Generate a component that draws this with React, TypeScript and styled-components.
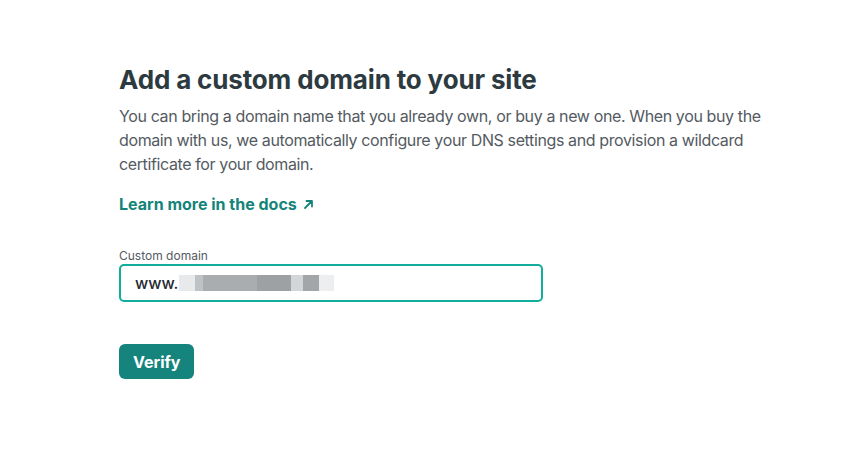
import React, { useState } from "react";
import styled, { createGlobalStyle } from "styled-components";

const GlobalStyle = createGlobalStyle`
  html, body {
    margin: 0;
    padding: 0;
    background: #ffffff;
  }
  body {
    font-family: Inter, "Noto Sans", sans-serif;
    -webkit-font-smoothing: antialiased;
  }
`;

const Page = styled.main`
  padding: 64px 0 0 119px;
`;

const Section = styled.section`
  display: flex;
  flex-direction: column;
  width: 660px;
`;

const Title = styled.h1`
  margin: 0;
  font-size: 26px;
  line-height: 32px;
  font-weight: 700;
  color: #2d3b41;
  letter-spacing: -0.15px;
`;

const Description = styled.p`
  margin: 8px 0 0;
  font-size: 16px;
  line-height: 24px;
  letter-spacing: -0.38px;
  color: #545a61;
`;

const DocsLink = styled.a`
  display: inline-flex;
  align-items: center;
  gap: 6px;
  margin-top: 16px;
  align-self: flex-start;
  font-size: 16px;
  line-height: 24px;
  font-weight: 700;
  color: #14847b;
  text-decoration: none;
`;

const Field = styled.div`
  display: flex;
  flex-direction: column;
  margin-top: 33px;
  width: 424px;
`;

const Label = styled.label`
  font-size: 12px;
  line-height: 14px;
  color: #545a61;
  margin-bottom: 1px;
`;

const InputBox = styled.div`
  display: flex;
  align-items: center;
  height: 38px;
  box-sizing: border-box;
  border: 2px solid #11ac9c;
  border-radius: 5px;
  padding: 0 14px;
  font-size: 16px;
  font-weight: 500;
  color: #1f2a30;
`;

const Blurred = styled.span`
  display: inline-block;
  width: 155px;
  height: 16px;
  margin-left: 1px;
  background: linear-gradient(
    to right,
    #e7e9ea 0 16px,
    #bfc2c5 16px 24px,
    #a9adb0 24px 78px,
    #9da1a4 78px 112px,
    #d3d6d8 112px 124px,
    #a2a6a9 124px 140px,
    #eceeef 140px 155px
  );
  filter: blur(0.3px);
`;

const Button = styled.button`
  margin-top: 42px;
  align-self: flex-start;
  height: 35px;
  padding: 0 14px;
  border: none;
  border-radius: 6px;
  background: #15847d;
  color: #ffffff;
  font-family: Inter, "Noto Sans", sans-serif;
  font-size: 16px;
  font-weight: 700;
  cursor: pointer;
`;

const ArrowIcon = () => (
  <svg width="11" height="11" viewBox="0 0 11 11" fill="none">
    <path
      d="M2 9 L9 2 M3.5 2 H9 V7.5"
      stroke="#14847b"
      strokeWidth="1.8"
      strokeLinecap="round"
      strokeLinejoin="round"
    />
  </svg>
);

export default function App() {
  const [domain] = useState<string>("www.");

  return (
    <>
      <GlobalStyle />
      <Page>
        <Section>
          <Title>Add a custom domain to your site</Title>
          <Description>
            You can bring a domain name that you already own, or buy a new one.
            When you buy the domain with us, we automatically configure your DNS
            settings and provision a wildcard certificate for your domain.
          </Description>
          <DocsLink href="#">
            Learn more in the docs <ArrowIcon />
          </DocsLink>
          <Field>
            <Label htmlFor="customDomain">Custom domain</Label>
            <InputBox id="customDomain">
              {domain}
              <Blurred />
            </InputBox>
          </Field>
          <Button type="button">Verify</Button>
        </Section>
      </Page>
    </>
  );
}
